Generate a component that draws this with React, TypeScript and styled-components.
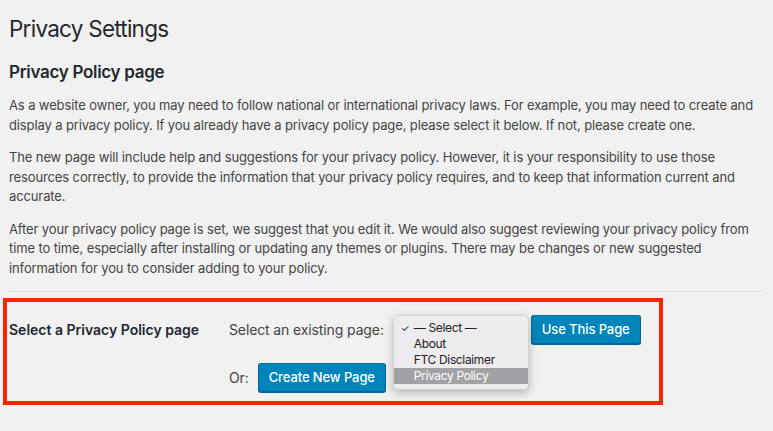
import styled, { createGlobalStyle } from "styled-components";

const GlobalStyle = createGlobalStyle`
  html, body {
    margin: 0;
    padding: 0;
    background: #f1f1f1;
  }
  body {
    font-family: Inter, "Noto Sans", "Liberation Sans", sans-serif;
    color: #444;
    font-size: 13px;
    line-height: 1.5;
  }
`;

const Wrap = styled.div`
  padding: 0 11px 0 9px;
`;

const Title = styled.h1`
  margin: 0;
  padding: 14px 0 0;
  font-size: 22.5px;
  font-weight: 400;
  line-height: 29px;
  letter-spacing: -0.75px;
  color: #23282d;
`;

const Heading = styled.h2`
  margin: 18px 0 0;
  font-size: 17px;
  font-weight: 600;
  line-height: 22px;
  letter-spacing: -0.3px;
  color: #23282d;
`;

const Para = styled.p`
  margin: 13px 0;
  font-size: 13px;
  line-height: 19.5px;
  letter-spacing: -0.12px;
  color: #444;
`;

const Rule = styled.hr`
  margin: 0 0 6px;
  border: 0;
  border-top: 1px solid #dcdcdc;
`;

const Highlight = styled.div`
  margin-left: -6px;
  width: 660px;
  box-sizing: border-box;
  border: 4px solid #ff2200;
  padding: 13px 0 9px 2px;
  display: flex;
`;

const RowLabel = styled.div`
  width: 220px;
  flex: none;
  font-size: 14px;
  font-weight: 600;
  color: #23282d;
  line-height: 29px;
`;

const Fields = styled.div`
  display: flex;
  flex-direction: column;
  gap: 19px;
`;

const FieldRow = styled.div`
  display: flex;
  align-items: center;
  gap: 9px;
  font-size: 14px;
  letter-spacing: -0.12px;
  color: #444;
`;

const Button = styled.button`
  height: 29px;
  padding: 0 10px 1px;
  font-family: inherit;
  font-size: 13px;
  font-weight: 500;
  letter-spacing: -0.1px;
  color: #fff;
  background: #0085ba;
  border: 1px solid;
  border-color: #0073aa #006799 #006799;
  border-radius: 3px;
  box-shadow: 0 1px 0 #006799;
  cursor: pointer;
  white-space: nowrap;
`;

const SelectSlot = styled.div`
  position: relative;
  width: 136px;
  height: 29px;
  margin-right: -7px;
`;

const Popup = styled.ul`
  position: absolute;
  top: 0;
  left: 0;
  width: 136px;
  margin: 0;
  padding: 4px 0 5px;
  list-style: none;
  box-sizing: border-box;
  background: #edebed;
  border: 1px solid #d4d2d4;
  border-radius: 5px;
  box-shadow: 0 3px 8px rgba(0, 0, 0, 0.25);
  z-index: 2;
`;

const Option = styled.li<{ $active?: boolean }>`
  position: relative;
  height: 16px;
  line-height: 16px;
  padding-left: 20px;
  font-size: 12px;
  letter-spacing: -0.35px;
  color: ${(p) => (p.$active ? "#fff" : "#222")};
  background: ${(p) => (p.$active ? "#a2a1a6" : "transparent")};
`;

const Check = styled.span`
  position: absolute;
  left: 7px;
  top: 0;
  font-size: 10px;
`;

const options = ["— Select —", "About", "FTC Disclaimer", "Privacy Policy"];

export default function App() {
  return (
    <>
      <GlobalStyle />
      <Wrap>
        <Title>Privacy Settings</Title>
        <Heading>Privacy Policy page</Heading>
        <Para>
          As a website owner, you may need to follow national or international privacy laws. For
          example, you may need to create and display a privacy policy. If you already have a
          privacy policy page, please select it below. If not, please create one.
        </Para>
        <Para>
          The new page will include help and suggestions for your privacy policy. However, it is
          your responsibility to use those resources correctly, to provide the information that
          your privacy policy requires, and to keep that information current and accurate.
        </Para>
        <Para>
          After your privacy policy page is set, we suggest that you edit it. We would also suggest
          reviewing your privacy policy from time to time, especially after installing or updating
          any themes or plugins. There may be changes or new suggested information for you to
          consider adding to your policy.
        </Para>
        <Rule />
        <Highlight>
          <RowLabel>Select a Privacy Policy page</RowLabel>
          <Fields>
            <FieldRow>
              <span>Select an existing page:</span>
              <SelectSlot>
                <Popup>
                  {options.map((o, i) => (
                    <Option key={o} $active={i === options.length - 1}>
                      {i === 0 && <Check>✓</Check>}
                      {o}
                    </Option>
                  ))}
                </Popup>
              </SelectSlot>
              <Button>Use This Page</Button>
            </FieldRow>
            <FieldRow>
              <span>Or:</span>
              <Button>Create New Page</Button>
            </FieldRow>
          </Fields>
        </Highlight>
      </Wrap>
    </>
  );
}
